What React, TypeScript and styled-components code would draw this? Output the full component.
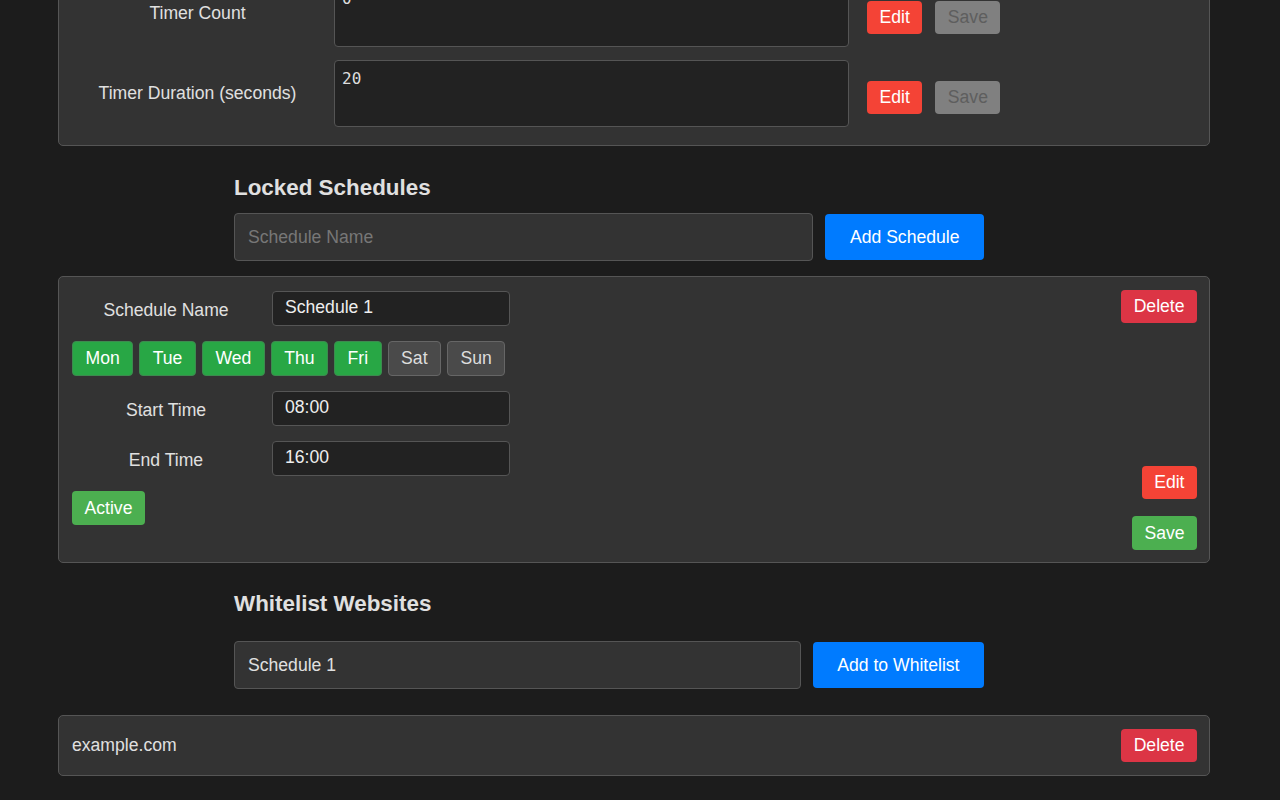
import * as React from "react";
import styled, { createGlobalStyle, css } from "styled-components";

// styled components
const GlobalStyle = createGlobalStyle`
body {
  margin: 0;
  background-color: #1c1c1c;
  color: #e0e0e0;
  font-family: "Liberation Sans", Arial, sans-serif;
  font-size: 17.6px;
}
`;

const Page = styled.main`
  width: 1152px;
  margin-left: 58px;
  padding-bottom: 24px;
`;

const Panel = styled.div`
  background-color: #333;
  border: 1px solid #555;
  border-radius: 5px;
`;

const SettingsPanel = styled(Panel)`
  margin-top: -41px;
  padding: 20px 20px 18px;
  display: grid;
  row-gap: 13px;
`;

const SettingRow = styled.div`
  display: grid;
  grid-template-columns: 237px 515px auto;
  column-gap: 18px;
  align-items: center;
`;

const SettingLabel = styled.label`
  text-align: center;
  color: #e0e0e0;
`;

const TextArea = styled.textarea`
  box-sizing: border-box;
  height: 67px;
  width: 100%;
  resize: none;
  background-color: #222;
  border: 1px solid #555;
  border-radius: 4px;
  color: #ddd;
  font-family: "DejaVu Sans Mono", monospace;
  font-size: 16px;
  padding: 8px 7px;
`;

const ButtonGroup = styled.div`
  display: flex;
  gap: 13px;
  padding-top: 7px;
`;

type Variant = "edit" | "save" | "disabled" | "delete" | "primary" | "active";

const colors: Record<Variant, { bg: string; fg: string }> = {
  edit: { bg: "#f44336", fg: "#fff" },
  save: { bg: "#4caf50", fg: "#fff" },
  disabled: { bg: "#808080", fg: "#5e5e5e" },
  delete: { bg: "#dc3545", fg: "#fff" },
  primary: { bg: "#007bff", fg: "#fff" },
  active: { bg: "#4caf50", fg: "#fff" },
};

const Button = styled.button<{ $variant: Variant }>`
  font-family: inherit;
  font-size: 17.6px;
  line-height: 21px;
  padding: 6px 12.5px;
  border: none;
  border-radius: 4px;
  cursor: pointer;
  ${({ $variant }) => css`
    background-color: ${colors[$variant].bg};
    color: ${colors[$variant].fg};
  `}
`;

const Section = styled.section`
  margin-left: 176px;
  width: 750px;
`;

const Heading = styled.h2<{ $top: number; $bottom: number }>`
  font-size: 22.4px;
  line-height: 26px;
  font-weight: bold;
  color: #e0e0e0;
  margin: ${({ $top, $bottom }) => `${$top}px 0 ${$bottom}px`};
`;

const FormRow = styled.div`
  display: flex;
  align-items: center;
  gap: 12px;
`;

const BigInput = styled.input`
  box-sizing: border-box;
  flex: 1;
  height: 48px;
  background-color: #333;
  border: 1px solid #555;
  border-radius: 4px;
  color: #e0e0e0;
  font-family: inherit;
  font-size: 17.6px;
  padding: 0 13px;
  &::placeholder {
    color: #777;
  }
`;

const AddButton = styled(Button)`
  height: 46px;
  padding: 0 24.5px;
`;

const ScheduleCard = styled(Panel)`
  margin-top: 15px;
  padding: 13px 12px 12px 13px;
  display: flex;
  justify-content: space-between;
`;

const ScheduleFields = styled.div`
  display: flex;
  flex-direction: column;
  gap: 15px;
  padding: 1px 0 25px;
`;

const FieldRow = styled.div`
  display: flex;
  align-items: center;
`;

const FieldLabel = styled.label`
  width: 188px;
  text-align: center;
  padding-top: 4px;
  color: #e0e0e0;
`;

const SmallInput = styled.input`
  box-sizing: border-box;
  width: 238px;
  height: 35px;
  margin-left: 12px;
  background-color: #222;
  border: 1px solid #555;
  border-radius: 4px;
  color: #eee;
  font-family: inherit;
  font-size: 17.6px;
  padding: 0 12px 3px;
`;

const DayRow = styled.div`
  display: flex;
  gap: 6px;
`;

const DayButton = styled.button<{ $on: boolean }>`
  font-family: inherit;
  font-size: 17.6px;
  line-height: 21px;
  padding: 6px 12.5px;
  border-radius: 4px;
  border: 1px solid ${({ $on }) => ($on ? "#3d8a4f" : "#666")};
  background-color: ${({ $on }) => ($on ? "#28a745" : "#4a4a4a")};
  color: ${({ $on }) => ($on ? "#fff" : "#ddd")};
`;

const ActiveRow = styled.div`
  display: flex;
`;

const ActiveButton = styled(Button)`
  line-height: 22px;
`;

const ScheduleActions = styled.div`
  display: flex;
  flex-direction: column;
  justify-content: space-between;
  align-items: flex-end;
`;

const BottomActions = styled.div`
  display: flex;
  flex-direction: column;
  align-items: flex-end;
  gap: 17px;
`;

const WhitelistItem = styled(Panel)`
  margin-top: 26px;
  padding: 13px 12px 13px 13px;
  display: flex;
  align-items: center;
  justify-content: space-between;
`;

const SiteName = styled.span`
  color: #e0e0e0;
`;

const days = [
  { name: "Mon", on: true },
  { name: "Tue", on: true },
  { name: "Wed", on: true },
  { name: "Thu", on: true },
  { name: "Fri", on: true },
  { name: "Sat", on: false },
  { name: "Sun", on: false },
];

const Setting = ({ label, value }: { label: string; value: string }) => (
  <SettingRow>
    <SettingLabel>{label}</SettingLabel>
    <TextArea defaultValue={value} readOnly />
    <ButtonGroup>
      <Button $variant="edit">Edit</Button>
      <Button $variant="disabled" disabled>
        Save
      </Button>
    </ButtonGroup>
  </SettingRow>
);

const App = () => {
  return (
    <React.Fragment>
      <GlobalStyle />
      <Page>
        <SettingsPanel>
          <Setting label="Timer Count" value="0" />
          <Setting label="Timer Duration (seconds)" value="20" />
        </SettingsPanel>

        <Section>
          <Heading $top={29} $bottom={12}>
            Locked Schedules
          </Heading>
          <FormRow>
            <BigInput placeholder="Schedule Name" />
            <AddButton $variant="primary">Add Schedule</AddButton>
          </FormRow>
        </Section>

        <ScheduleCard>
          <ScheduleFields>
            <FieldRow>
              <FieldLabel>Schedule Name</FieldLabel>
              <SmallInput defaultValue="Schedule 1" />
            </FieldRow>
            <DayRow>
              {days.map((d) => (
                <DayButton key={d.name} $on={d.on}>
                  {d.name}
                </DayButton>
              ))}
            </DayRow>
            <FieldRow>
              <FieldLabel>Start Time</FieldLabel>
              <SmallInput defaultValue="08:00" />
            </FieldRow>
            <FieldRow>
              <FieldLabel>End Time</FieldLabel>
              <SmallInput defaultValue="16:00" />
            </FieldRow>
            <ActiveRow>
              <ActiveButton $variant="active">Active</ActiveButton>
            </ActiveRow>
          </ScheduleFields>
          <ScheduleActions>
            <Button $variant="delete">Delete</Button>
            <BottomActions>
              <Button $variant="edit">Edit</Button>
              <ActiveButton $variant="save">Save</ActiveButton>
            </BottomActions>
          </ScheduleActions>
        </ScheduleCard>

        <Section>
          <Heading $top={28} $bottom={24}>
            Whitelist Websites
          </Heading>
          <FormRow>
            <BigInput defaultValue="Schedule 1" />
            <AddButton $variant="primary">Add to Whitelist</AddButton>
          </FormRow>
        </Section>

        <WhitelistItem>
          <SiteName>example.com</SiteName>
          <Button $variant="delete">Delete</Button>
        </WhitelistItem>
      </Page>
    </React.Fragment>
  );
};

export default App;
